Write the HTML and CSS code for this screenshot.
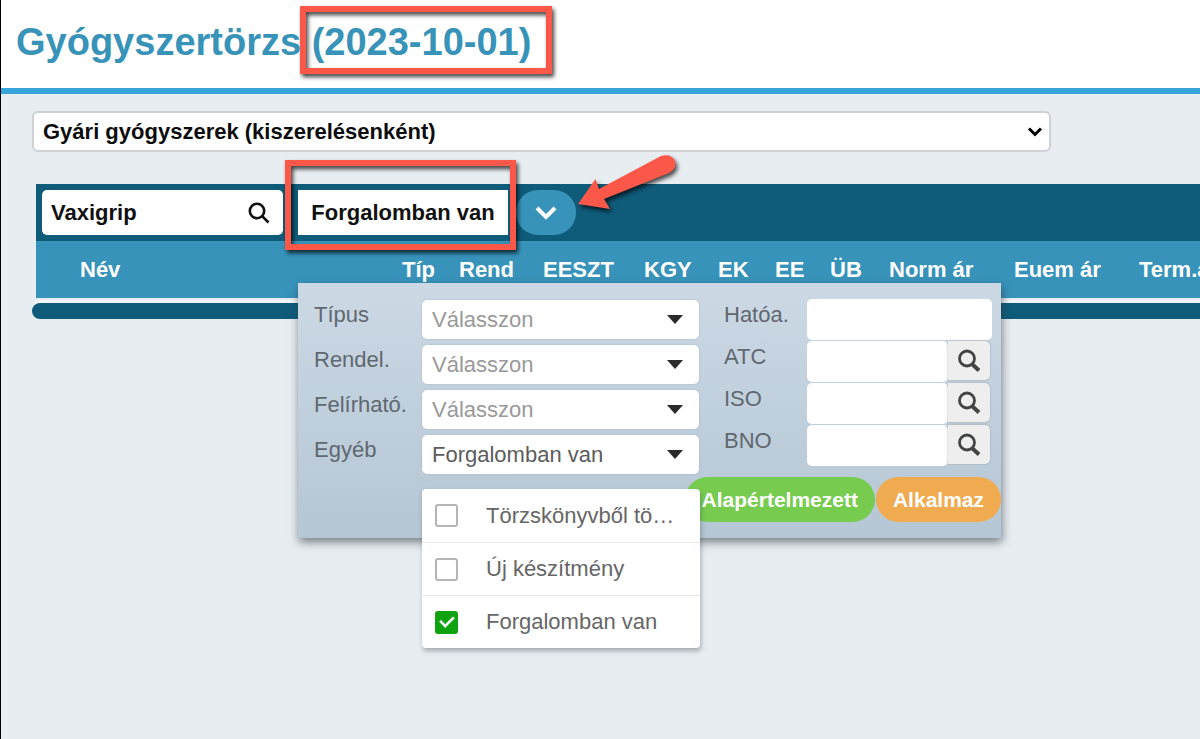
FILE: index.html
```html
<!DOCTYPE html>
<html lang="hu">
<head>
<meta charset="utf-8">
<title>Gyógyszertörzs</title>
<link rel="stylesheet" href="styles.css">
</head>
<body>
<header class="page-header">
  <h1 class="title">Gyógyszertörzs <span class="marked marked-date">(2023-10-01)</span></h1>
</header>
<main class="content">
  <div class="select-wrap catalog">
    <select class="catalog-select" aria-label="Törzs"><option>Gyári gyógyszerek (kiszerelésenként)</option></select>
    <svg class="catalog-arrow" viewBox="0 0 16 12" aria-hidden="true"><path d="M2 2.5 8 8.5 14 2.5"/></svg>
  </div>
  <section class="list">
    <div class="toolbar">
      <div class="search">
        <input class="search-input" type="text" value="Vaxigrip" aria-label="Keresés">
        <svg class="search-icon" viewBox="0 0 22 22" aria-hidden="true"><circle cx="9" cy="9" r="7.2"/><path d="M14.200 14.200 20.500 20.500"/></svg>
      </div>
      <div class="marked marked-filter"><button class="filter-tag" type="button">Forgalomban van</button></div>
      <button class="toggle" type="button" aria-label="Szűrők" aria-expanded="true">
        <svg class="toggle-icon" viewBox="0 0 22 16" aria-hidden="true"><path d="M2 3 11 12 20 3"/></svg>
      </button>
      <svg class="pointer" viewBox="0 0 110 66" aria-hidden="true"><path d="M8 54 25.500 29 29 39 91 6Q101 3 105 11 107 19 99 23L34 49 40 59Z"/></svg>

      <form class="panel">
        <div class="fields">
          <div class="field-grid choices">
            <label class="label" for="tipus">Típus</label>
            <div class="select-wrap"><select class="choice" id="tipus"><option>Válasszon</option></select><svg class="caret" viewBox="0 0 18 10" aria-hidden="true"><path d="M1 0H17L9 9Z"/></svg></div>
            <label class="label" for="rendel">Rendel.</label>
            <div class="select-wrap"><select class="choice" id="rendel"><option>Válasszon</option></select><svg class="caret" viewBox="0 0 18 10" aria-hidden="true"><path d="M1 0H17L9 9Z"/></svg></div>
            <label class="label" for="felirhato">Felírható.</label>
            <div class="select-wrap"><select class="choice" id="felirhato"><option>Válasszon</option></select><svg class="caret" viewBox="0 0 18 10" aria-hidden="true"><path d="M1 0H17L9 9Z"/></svg></div>
            <label class="label" for="egyeb">Egyéb</label>
            <div class="select-wrap"><select class="choice chosen" id="egyeb"><option>Forgalomban van</option></select><svg class="caret" viewBox="0 0 18 10" aria-hidden="true"><path d="M1 0H17L9 9Z"/></svg>
              <div class="menu">
                <label class="menu-item"><input class="check" type="checkbox"><span>Törzskönyvből tö…</span></label>
                <label class="menu-item"><input class="check" type="checkbox"><span>Új készítmény</span></label>
                <label class="menu-item"><input class="check" type="checkbox" checked><span>Forgalomban van</span></label>
              </div>
            </div>
          </div>
          <div class="field-grid codes">
            <label class="label" for="hatoa">Hatóa.</label>
            <input class="code" id="hatoa" type="text">
            <label class="label" for="atc">ATC</label>
            <div class="lookup"><input class="code" id="atc" type="text"><button class="lookup-button" type="button" aria-label="ATC keresése"><svg class="lookup-icon" viewBox="0 0 24 24" aria-hidden="true"><circle cx="10" cy="9.500" r="7.500"/><path class="handle" d="M15.500 15.500 22 21.500"/></svg></button></div>
            <label class="label" for="iso">ISO</label>
            <div class="lookup"><input class="code" id="iso" type="text"><button class="lookup-button" type="button" aria-label="ISO keresése"><svg class="lookup-icon" viewBox="0 0 24 24" aria-hidden="true"><circle cx="10" cy="9.500" r="7.500"/><path class="handle" d="M15.500 15.500 22 21.500"/></svg></button></div>
            <label class="label" for="bno">BNO</label>
            <div class="lookup"><input class="code" id="bno" type="text"><button class="lookup-button" type="button" aria-label="BNO keresése"><svg class="lookup-icon" viewBox="0 0 24 24" aria-hidden="true"><circle cx="10" cy="9.500" r="7.500"/><path class="handle" d="M15.500 15.500 22 21.500"/></svg></button></div>
          </div>
        </div>
        <div class="actions">
          <button class="action reset" type="button">Alapértelmezett</button>
          <button class="action apply" type="button">Alkalmaz</button>
        </div>
      </form>
    </div>
    <div class="table-clip">
      <table class="table">
        <thead>
          <tr>
            <th class="col-name">Név</th><th class="col-tip">Típ</th><th class="col-rend">Rend</th><th class="col-eeszt">EESZT</th><th class="col-kgy">KGY</th><th class="col-ek">EK</th><th class="col-ee">EE</th><th class="col-ub">ÜB</th><th class="col-price">Norm ár</th><th class="col-price">Euem ár</th><th class="col-price">Term.ár</th>
          </tr>
        </thead>
      </table>
    </div>
  </section>
  <div class="footer-bar"></div>
</main>
</body>
</html>
```
FILE: styles.css
```css
* { box-sizing: border-box; }

body {
  margin: 0;
  min-height: 100vh;
  border-left: 1px solid #000;
  background: #e8edf1;
  font: 22px/26px "Liberation Sans", Arial, sans-serif;
  color: #5f6870;
  overflow-x: hidden;
}

button, input, select { font: inherit; margin: 0; border: 0; }

.page-header {
  height: 94px;
  padding: 20px 15px;
  background: #fff;
  border-bottom: 6px solid #36a5dc;
}

.title {
  margin: 0;
  font-size: 38px;
  line-height: 44px;
  color: #3893b8;
  white-space: nowrap;
}

/* Red call-out frames */
.marked { position: relative; }
.marked::after {
  content: "";
  position: absolute;
  border: 6px solid #fb584a;
  filter: drop-shadow(2px 3px 2px rgba(0, 0, 0, .75));
  pointer-events: none;
}
.marked-date::after { inset: -15px -21px -11px -12px; }
.marked-filter::after { inset: -30px -8px -15px -13px; }

.content { padding-top: 17px; }

.select-wrap { position: relative; display: flex; align-items: center; }
.catalog { width: 85%; margin-left: 31px; }
.catalog-select {
  width: 100%;
  height: 41px;
  padding: 0 9px;
  border: 2px solid #cfd2d4;
  border-radius: 6px;
  background: #fff;
  color: #0c0c0c;
  font-weight: bold;
  appearance: none;
}
.catalog-arrow {
  position: absolute;
  right: 8px;
  width: 16px;
  height: 12px;
  fill: none;
  stroke: #000;
  stroke-width: 3;
}

.list { margin: 32px 0 0 35px; }

.toolbar {
  position: relative;
  display: flex;
  height: 57px;
  padding: 6px;
  background: #0f5c7a;
  z-index: 1;
}
.search { position: relative; display: flex; align-items: center; width: 241px; margin-right: 15px; }
.search-input {
  width: 100%;
  height: 45px;
  padding: 0 48px 0 9px;
  border-radius: 5px;
  background: #fff;
  color: #111;
  font-weight: bold;
}
.search-icon {
  position: absolute;
  right: 13px;
  width: 22px;
  height: 22px;
  fill: none;
  stroke: #111;
  stroke-width: 2.6;
}
.filter-tag {
  height: 45px;
  width: 210px;
  padding: 0;
  background: #fff;
  color: #111;
  font-weight: bold;
  white-space: nowrap;
}
.marked-filter { z-index: 1; }
.toggle {
  display: grid;
  place-items: center;
  width: 60px;
  height: 45px;
  margin-left: 8px;
  padding: 0;
  border-radius: 22px;
  background: #3893ba;
}
.toggle-icon { width: 22px; height: 16px; fill: none; stroke: #fff; stroke-width: 4; }

.pointer {
  position: absolute;
  left: 534px;
  top: -34px;
  width: 110px;
  height: 66px;
  fill: #fb584a;
  overflow: visible;
  filter: drop-shadow(2px 3px 2px rgba(0, 0, 0, .7));
  pointer-events: none;
}

/* Filter panel */
.panel {
  position: absolute;
  left: 262px;
  top: 99px;
  width: 703px;
  padding: 16px 0;
  background: linear-gradient(#ccd9e5, #b5c6d4);
  box-shadow: 1px 4px 9px rgba(40, 50, 60, .6);
}
.fields { display: flex; gap: 25px; padding: 0 9px 0 16px; align-items: flex-start; }
.field-grid { display: grid; align-items: start; }
.choices { grid-template-columns: 108px 277px; row-gap: 6px; padding-top: 1px; }
.codes { grid-template-columns: 83px 1fr; row-gap: 1px; flex: 1; }
.label { line-height: 32px; }
.choices .label { line-height: 30px; }
.choice {
  width: 100%;
  height: 39px;
  padding: 0 10px;
  border-radius: 5px;
  background: #fff;
  color: #999;
  appearance: none;
  box-shadow: 0 0 2px #a9b4bd;
}
.chosen { color: #5c5c5c; }
.caret { position: absolute; right: 15px; width: 18px; height: 10px; fill: #2b2b2b; }

.code {
  width: 100%;
  min-width: 0;
  height: 41px;
  padding: 0 8px;
  border-radius: 5px;
  background: #fff;
}
.lookup { display: flex; padding-right: 2px; }
.lookup .code { flex: 1; }
.lookup-button {
  display: grid;
  place-items: center;
  width: 42px;
  height: 39px;
  padding: 0;
  border-radius: 0 5px 5px 0;
  background: #eee;
  box-shadow: 0 0 2px #999;
}
.lookup-icon { width: 24px; height: 24px; fill: none; stroke: #444; stroke-width: 2.8; }
.handle { stroke-width: 4; }

.actions { display: flex; justify-content: flex-end; gap: 1px; margin-top: 3px; }
.action {
  height: 45px;
  padding: 0 17px;
  border-radius: 23px;
  color: #fff;
  font-size: 21px;
  font-weight: bold;
}
.reset { background: #77cc4f; }
.apply { background: #f0ab50; }

.menu {
  position: absolute;
  z-index: 2;
  top: 54px;
  left: 0;
  right: -1px;
  border-radius: 4px;
  background: #fff;
  box-shadow: 1px 3px 5px rgba(60, 70, 80, .4);
}
.menu-item {
  display: flex;
  align-items: center;
  gap: 28px;
  height: 53px;
  padding-left: 13px;
  color: #666;
  white-space: nowrap;
}
.menu-item + .menu-item { border-top: 1px solid #e6e6e6; }
.check {
  display: grid;
  place-items: center;
  width: 23px;
  height: 23px;
  border: 2px solid #b5b5b5;
  border-radius: 3px;
  background: #fff;
  appearance: none;
}
.check:checked { border-color: #10a310; background: #10a310; }
.check:checked::before {
  content: "";
  width: 13px;
  height: 7px;
  border: solid #fff;
  border-width: 0 0 3px 3px;
  transform: translateY(-2px) rotate(-45deg) scale(.85);
}

/* Results table */
.table-clip { overflow: hidden; }
.table { width: 100%; table-layout: fixed; border-collapse: collapse; background: #3893ba; }
.table th { height: 57px; padding: 0; text-align: left; color: #fff; white-space: nowrap; }
.table .col-name { width: 366px; padding-left: 44px; }
.col-tip { width: 57px; }
.col-rend { width: 84px; }
.col-eeszt { width: 101px; }
.col-kgy { width: 74px; }
.col-ek { width: 57px; }
.col-ee { width: 55px; }
.col-ub { width: 59px; }
.col-price { width: 125px; }

.footer-bar {
  height: 16px;
  margin: 5px 0 0 31px;
  border-radius: 8px 0 0 8px;
  background: #0f5c7a;
  box-shadow: 0 -3px 0 #f3f6f8;
}
```
